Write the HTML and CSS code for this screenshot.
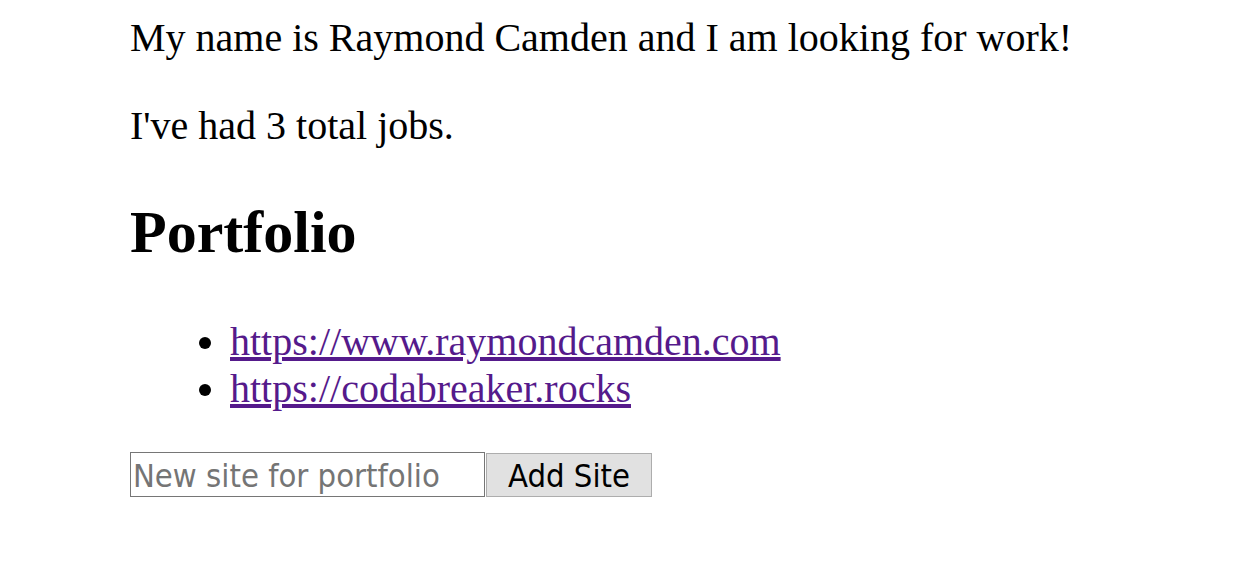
FILE: index.html
```html
<!DOCTYPE html>
<html>
<head>
<meta charset="utf-8">
<link rel="stylesheet" href="styles.css">
</head>
<body>
<div class="app">
  <p class="intro">My name is Raymond Camden and I am looking for work!</p>
  <p class="jobs">I've had 3 total jobs.</p>
  <h2 class="title">Portfolio</h2>
  <ul class="sites">
    <li><a href="#">https://www.raymondcamden.com</a></li>
    <li><a href="#">https://codabreaker.rocks</a></li>
  </ul>
  <div class="add-form">
    <input class="site-input" type="text" placeholder="New site for portfolio">
    <button class="add-btn">Add Site</button>
  </div>
</div>
</body>
</html>
```

FILE: styles.css
```css
html, body {
  margin: 0;
  padding: 0;
  background: #ffffff;
}
.app {
  padding: 14px 0 0 130px;
  font-family: "Liberation Serif", "Times New Roman", serif;
  font-size: 40px;
  line-height: 47px;
  color: #000;
}
.intro {
  margin: 0;
}
.jobs {
  margin: 41px 0 0 0;
}
.title {
  margin: 50px 0 0 0;
  font-size: 60px;
  line-height: 66px;
  font-weight: bold;
}
.sites {
  margin: 53px 0 0 0;
  padding-left: 100px;
}
.sites a {
  color: #551a8b;
  text-decoration: underline;
}
.add-form {
  margin-top: 40px;
  display: flex;
  align-items: center;
  gap: 1px;
}
.site-input {
  box-sizing: border-box;
  width: 355px;
  height: 45px;
  margin: 0;
  border: 1px solid #767676;
  padding: 2px 2px 0 2px;
  font-family: "DejaVu Sans Condensed", "DejaVu Sans", Verdana, sans-serif;
  font-stretch: semi-condensed;
  font-size: 32.5px;
  color: #000;
  background: #fff;
  outline: none;
}
.site-input::placeholder {
  color: #757575;
}
.add-btn {
  box-sizing: border-box;
  width: 166px;
  height: 44px;
  margin: 0;
  border: 1px solid #adadad;
  background: #e1e1e1;
  padding: 2px 0 0 0;
  font-family: "DejaVu Sans Condensed", "DejaVu Sans", Verdana, sans-serif;
  font-stretch: semi-condensed;
  font-size: 32.5px;
  color: #000;
}
```
